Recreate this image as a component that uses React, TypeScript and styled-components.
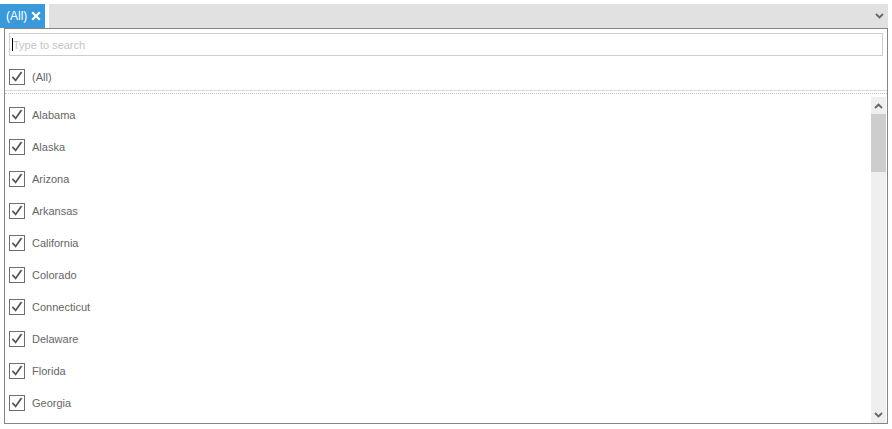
import React from "react";
import styled, { createGlobalStyle } from "styled-components";

const Global = createGlobalStyle`
  html, body { margin: 0; padding: 0; background: #fff; }
  body { font-family: "Liberation Sans", Arial, sans-serif; }
  * { box-sizing: border-box; }
`;

const Page = styled.div`
  width: 892px;
  height: 429px;
  padding-top: 4px;
  overflow: hidden;
`;

const TopBar = styled.div`
  display: flex;
  height: 24px;
  width: 888px;
  gap: 4px;
`;

const Tag = styled.div`
  display: flex;
  align-items: center;
  gap: 4px;
  width: 45px;
  padding-left: 6px;
  background: #3a9ad9;
  color: #fff;
  font-size: 12px;
`;

const Field = styled.div`
  flex: 1;
  display: flex;
  align-items: center;
  justify-content: flex-end;
  padding-right: 4px;
  background: #e1e1e1;
`;

const Panel = styled.div`
  margin-left: 4px;
  width: 884px;
  height: 396px;
  border: 1px solid #858585;
  display: flex;
  flex-direction: column;
`;

const Header = styled.div`
  padding: 4px 4px 0 4px;
  border-bottom: 1px solid #dcdcdc;
`;

const SearchWrap = styled.div`
  position: relative;
`;

const Search = styled.input`
  display: block;
  width: 100%;
  height: 23px;
  border: 1px solid #cfcfcf;
  padding: 0 3px;
  font-family: "Liberation Sans", Arial, sans-serif;
  font-size: 11px;
  color: #444;
  outline: none;
  &::placeholder { color: #c4c4c4; }
`;

const Caret = styled.span`
  position: absolute;
  left: 3px;
  top: 5px;
  width: 1px;
  height: 13px;
  background: #000;
`;

const AllRow = styled.div`
  display: flex;
  align-items: center;
  gap: 7px;
  height: 24px;
  margin-top: 9px;
  margin-bottom: 1px;
  font-size: 11px;
  color: #666;
`;

const Dotted = styled.div`
  margin-top: 2px;
  border-top: 1px dotted #c8c8c8;
`;

const Body = styled.div`
  display: flex;
  flex: 1;
  min-height: 0;
  margin-top: 3px;
`;

const List = styled.div`
  flex: 1;
  overflow: hidden;
  padding: 2px 4px 0 4px;
`;

const Row = styled.div`
  display: flex;
  align-items: center;
  gap: 7px;
  height: 32px;
  font-size: 11px;
  color: #666;
`;

const Box = styled.span`
  display: flex;
  align-items: center;
  justify-content: center;
  width: 16px;
  height: 16px;
  border: 1px solid #6e6e6e;
  background: #fff;
  flex: none;
`;

const ScrollBar = styled.div`
  width: 15px;
  margin-right: 1px;
  display: flex;
  flex-direction: column;
  background: #efefef;
`;

const ArrowBtn = styled.div`
  height: 17px;
  display: flex;
  align-items: center;
  justify-content: center;
`;

const Track = styled.div`
  flex: 1;
`;

const Thumb = styled.div`
  height: 58px;
  background: #cdcdcd;
`;

const Check = () => (
  <svg width="12" height="12" viewBox="0 0 12 12">
    <path d="M2 6.6 L4.6 9.4 L10 1.8" fill="none" stroke="#555" strokeWidth="1.8" strokeLinecap="square" strokeLinejoin="miter" />
  </svg>
);

const Chevron = ({ up }: { up?: boolean }) => (
  <svg width="9" height="6" viewBox="0 0 9 6" style={up ? { transform: "rotate(180deg)" } : undefined}>
    <path d="M1 1 L4.5 4.5 L8 1" fill="none" stroke="#666" strokeWidth="1.8" />
  </svg>
);

const Close = () => (
  <svg width="10" height="10" viewBox="0 0 10 10">
    <path d="M1.2 1.2 L8.8 8.8 M8.8 1.2 L1.2 8.8" stroke="#fff" strokeWidth="2.2" />
  </svg>
);

const states = [
  "Alabama", "Alaska", "Arizona", "Arkansas", "California", "Colorado", "Connecticut",
  "Delaware", "Florida", "Georgia",
];

export default function App() {
  return (
    <Page>
      <Global />
      <TopBar>
        <Tag>
          (All) <Close />
        </Tag>
        <Field>
          <Chevron />
        </Field>
      </TopBar>
      <Panel>
        <Header>
          <SearchWrap>
            <Search placeholder="Type to search" />
            <Caret />
          </SearchWrap>
          <AllRow>
            <Box><Check /></Box>
            (All)
          </AllRow>
        </Header>
        <Dotted />
        <Body>
          <List>
            {states.map((s) => (
              <Row key={s}>
                <Box><Check /></Box>
                {s}
              </Row>
            ))}
          </List>
          <ScrollBar>
            <ArrowBtn><Chevron up /></ArrowBtn>
            <Track><Thumb /></Track>
            <ArrowBtn><Chevron /></ArrowBtn>
          </ScrollBar>
        </Body>
      </Panel>
    </Page>
  );
}
